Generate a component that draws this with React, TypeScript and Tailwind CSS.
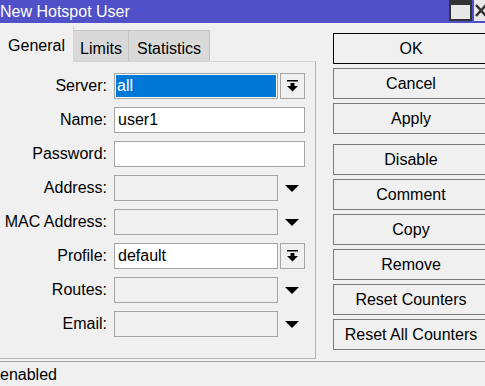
import React from "react";

type Row = {
  label: string;
  value?: string;
  kind: "select" | "text" | "combo";
  selected?: boolean;
};

const rows: Row[] = [
  { label: "Server:", value: "all", kind: "select", selected: true },
  { label: "Name:", value: "user1", kind: "text" },
  { label: "Password:", value: "", kind: "text" },
  { label: "Address:", kind: "combo" },
  { label: "MAC Address:", kind: "combo" },
  { label: "Profile:", value: "default", kind: "select" },
  { label: "Routes:", kind: "combo" },
  { label: "Email:", kind: "combo" },
];

const buttons = [
  ["OK", "Cancel", "Apply"],
  ["Disable", "Comment", "Copy", "Remove", "Reset Counters", "Reset All Counters"],
];

function BarArrow() {
  return (
    <svg width="11" height="12" viewBox="0 0 11 12">
      <rect x="0" y="0" width="11" height="1.5" fill="#000" />
      <rect x="3.5" y="3" width="4" height="3" fill="#000" />
      <polygon points="0,6 11,6 5.5,11.5" fill="#000" />
    </svg>
  );
}

function Triangle() {
  return (
    <svg width="14" height="7" viewBox="0 0 14 7">
      <polygon points="0,0 14,0 7,7" fill="#000" />
    </svg>
  );
}

function CloseGlyph() {
  return (
    <svg width="11" height="21" viewBox="0 0 11 21">
      <path d="M2 5 L12 16 M12 5 L2 16" stroke="#333" strokeWidth="2.5" fill="none" />
    </svg>
  );
}

function FormRow({ row }: { row: Row }) {
  return (
    <div className="flex h-[26px] items-center">
      <div className="w-[108px] pr-[1px] text-right">{row.label}</div>
      {row.kind === "text" && (
        <div className="ml-[6px] flex h-[26px] w-[191px] items-center border border-[#a5a5a5] bg-white pl-[3px]">
          {row.value}
        </div>
      )}
      {row.kind === "select" && (
        <>
          <div
            className={`ml-[6px] flex h-[26px] w-[164px] items-center border border-[#a5a5a5] ${
              row.selected ? "bg-white p-[1px]" : "bg-white pl-[3px]"
            }`}
          >
            {row.selected ? (
              <div className="flex h-full w-full items-center bg-[#0078d7] pl-[1px] text-white">
                {row.value}
              </div>
            ) : (
              row.value
            )}
          </div>
          <div className="ml-[2px] flex h-[26px] w-[25px] items-center justify-center border border-[#a5a5a5] bg-[#f0f0f0]">
            <BarArrow />
          </div>
        </>
      )}
      {row.kind === "combo" && (
        <>
          <div className="ml-[6px] h-[26px] w-[164px] border border-[#a5a5a5] bg-[#f0f0f0]" />
          <div className="flex w-[27px] items-center justify-center">
            <Triangle />
          </div>
        </>
      )}
    </div>
  );
}

export default function App() {
  return (
    <div
      className="flex h-[386px] w-[485px] flex-col overflow-hidden bg-[#f0f0f0] text-[16px] leading-none text-black"
      style={{ fontFamily: '"Liberation Sans", Arial, sans-serif' }}
    >
      {/* Title bar */}
      <div className="flex h-[23px] shrink-0 items-center bg-[#5050c8]">
        <div className="flex-1 pt-[1px] text-white">New Hotspot User</div>
        <div className="mr-[2px] flex h-[21px] w-[23px] self-start items-start border-2 border-[#333] bg-[#e8e8e8]">
          <div className="h-[3px] w-full bg-[#333]" />
        </div>
        <div className="flex h-[21px] w-[11px] self-start overflow-hidden bg-[#e8e8e8]">
          <CloseGlyph />
        </div>
      </div>

      <div className="flex flex-1">
        {/* Left side — tabs and form */}
        <div className="flex w-[316px] shrink-0 flex-col">
          <div className="flex h-[38px] items-end">
            <div className="relative z-10 -mb-[1px] flex h-[36px] w-[74px] items-start justify-center border-r border-[#d4d4d4] bg-[#f0f0f0] pt-[12px]">
              General
            </div>
            <div className="flex h-[31px] w-[55px] items-start justify-center border border-b-0 border-l-0 border-[#c4c4c4] bg-[#d9d9d9] pt-[10px]">
              Limits
            </div>
            <div className="flex h-[31px] w-[81px] items-start justify-center border border-b-0 border-l-0 border-[#c4c4c4] bg-[#d9d9d9] pt-[10px]">
              Statistics
            </div>
          </div>
          <div className="flex h-[298px] flex-col gap-[8px] border-r border-b border-t border-[#b4b4b4] border-t-[#d4d4d4] pt-[11px]">
            {rows.map((r) => (
              <FormRow key={r.label} row={r} />
            ))}
          </div>
        </div>

        {/* Right side — action buttons */}
        <div className="ml-[17px] flex w-[156px] shrink-0 flex-col gap-[10px] pt-[10px]">
          {buttons.map((group, gi) => (
            <div key={gi} className="flex flex-col gap-[4px]">
              {group.map((b) => (
                <div
                  key={b}
                  className={`flex h-[31px] items-center justify-center border bg-[#f0f0f0] ${
                    b === "OK" ? "border-black" : "border-[#7a7a7a]"
                  }`}
                >
                  {b}
                </div>
              ))}
            </div>
          ))}
        </div>
      </div>

      {/* Status bar */}
      <div className="h-[25px] shrink-0 border-t border-[#a0a0a0] pt-[5px]">enabled</div>
    </div>
  );
}
